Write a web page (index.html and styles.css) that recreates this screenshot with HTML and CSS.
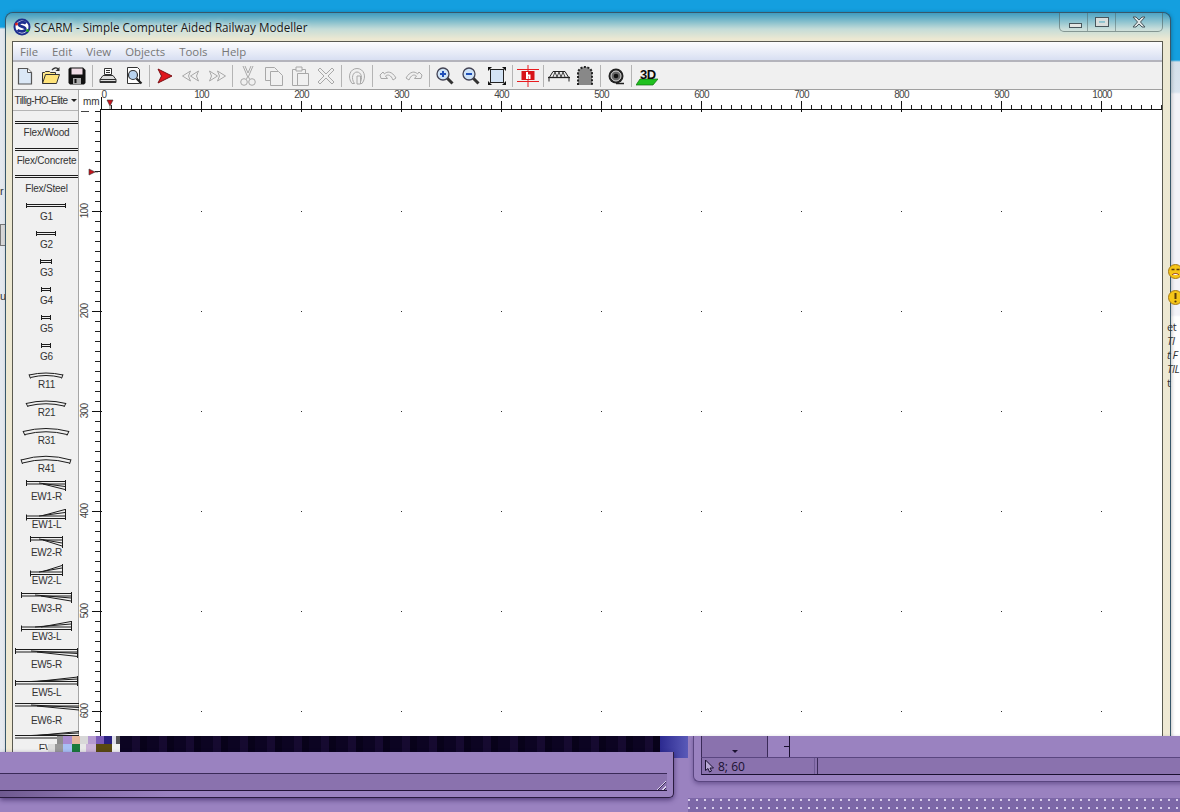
FILE: index.html
```html
<!DOCTYPE html>
<html>
<head>
    <title>SCARM - Simple Computer Aided Railway Modeller</title>
    <link rel="stylesheet" href="styles.css">
</head>
<body>
    <section class="desktop">
        <span class="behind behind-r">r</span>
        <span class="behind behind-btn"></span>
        <span class="behind behind-u">u</span>

        <section class="window">
            <div class="titlebar">
                <svg class="app-logo" width="18" height="18" viewBox="0 0 18 18">
                    <circle cx="9" cy="9" r="7.500" fill="#fff" stroke="#1d2f8f" stroke-width="2"/>
                    <path d="M13 5.500C11 3.500 5.500 4 6 6.800c.4 2.200 6.500 1.700 6.300 4.400C12 14 6.500 14 4.500 12" fill="none" stroke="#1d2f8f" stroke-width="2.800"/>
                    <circle cx="3.500" cy="6" r="1.500" fill="#d22"/>
                    <circle cx="14.500" cy="12.500" r="1.500" fill="#2a2"/>
                </svg>
                <span class="app-title">SCARM - Simple Computer Aided Railway Modeller</span>
            </div>
            <div class="controls">
                <span class="ctl ctl-min"><i></i></span>
                <span class="ctl ctl-max"><i></i></span>
                <span class="ctl ctl-close">
                    <svg width="16" height="12" viewBox="0 0 16 12"><path d="M2 1h3l3 3 3-3h3l-4.500 5 4.500 5h-3l-3-3-3 3H2l4.500-5z" fill="#dfe5e6" stroke="#47565c"/></svg>
                </span>
            </div>

            <div class="frame">
                <nav class="menu">
                    <span>File</span><span>Edit</span><span>View</span><span>Objects</span><span>Tools</span><span>Help</span>
                </nav>

                <div class="toolbar">
                    <span class="tool"><svg viewBox="0 0 20 20"><path d="M3.500 2.500h9l4 4v11.500h-13z" fill="#dbe8f6" stroke="#555" stroke-width="1.200"/><path d="M12.500 2.500v4h4" fill="#fff" stroke="#555"/></svg></span>
                    <span class="tool"><svg viewBox="0 0 20 20"><path d="M1.500 17.500v-11h2l1-1h4l1 1h5v2" fill="#ffe88a" stroke="#333"/><path d="M1.500 17.500l3-9h14l-3 9z" fill="#ffe47a" stroke="#333"/><path d="M11 4c2-2.500 4.500-2.500 6-1" fill="none" stroke="#333" stroke-width="1.300"/><path d="M18.500 1v4h-4z" fill="#333"/></svg></span>
                    <span class="tool"><svg viewBox="0 0 20 20"><path d="M3 1.500h13l2.500 2.500v13l-1.500 1.500H3L1.500 17V3z" fill="#111"/><rect x="4.500" y="2.500" width="11" height="6" fill="#f0dde6"/><rect x="6" y="12" width="8" height="6" fill="#aaa"/><rect x="7.500" y="13" width="2" height="4" fill="#111"/></svg></span>
                    <i class="tool-sep"></i>
                    <span class="tool"><svg viewBox="0 0 20 20"><path d="M6.500 2.500h7v6h-7z" fill="#fff" stroke="#333"/><path d="M8 4.500h4M8 6.500h4" stroke="#333"/><path d="M5 9.500h10l3 4v3h-16v-3z" fill="#ddd" stroke="#333"/><path d="M2 13.500h16" stroke="#333"/><rect x="2" y="15" width="16" height="2" fill="#333"/></svg></span>
                    <span class="tool"><svg viewBox="0 0 20 20"><path d="M3.500 1.500h10l2 2v14h-12z" fill="#fff" stroke="#333"/><circle cx="9" cy="9" r="4.500" fill="#b9d3ee" stroke="#333" stroke-width="1.200"/><path d="M12.500 12.500l5 5" stroke="#222" stroke-width="2.200"/></svg></span>
                    <i class="tool-sep"></i>
                    <span class="tool"><svg viewBox="0 0 20 20"><path d="M3 3l14 7-14 7 3.500-7z" fill="#e0161c" stroke="#7a1015"/></svg></span>
                    <span class="tool off"><svg viewBox="0 0 20 20"><path d="M1.500 10l8-5-2 5 2 5zM9.500 10l8-5-2 5 2 5z"/></svg></span>
                    <span class="tool off"><svg viewBox="0 0 20 20"><path d="M18.500 10l-8-5 2 5-2 5zM10.500 10l-8-5 2 5-2 5z"/></svg></span>
                    <i class="tool-sep"></i>
                    <span class="tool off"><svg viewBox="0 0 20 20"><path d="M5 0l4.500 10.500M15 0l-4.500 10.500"/><path d="M7 0l3 7 3-7"/><circle cx="6" cy="16" r="3.300"/><circle cx="14" cy="16" r="3.300"/><path d="M8.500 13l1.500-3 1.500 3"/></svg></span>
                    <span class="tool off"><svg viewBox="0 0 20 20"><path d="M1.500 1.500h9l3 3v10h-12z"/><path d="M6.500 5.500h8l4 4v10h-12z" fill="#f0f0f0"/></svg></span>
                    <span class="tool off"><svg viewBox="0 0 20 20"><path d="M2.500 3.500h13v16h-13z"/><path d="M6 1h6v4H6z" fill="#f0f0f0"/><path d="M7.500 7.500h11v12h-11z" fill="#f0f0f0"/></svg></span>
                    <span class="tool off"><svg viewBox="0 0 20 20"><path d="M2 4l2-2 6 6 6-6 2 2-6 6 6 6-2 2-6-6-6 6-2-2 6-6z"/></svg></span>
                    <i class="tool-sep"></i>
                    <span class="tool off"><svg viewBox="0 0 20 20"><path d="M5 17.500C0 11 3 2.500 10 2.500s10 8.500 5 15h-2.500C16.500 12 14 6 10 6S3.500 12 7.500 17.500z"/><path d="M10 10h3.500v8H10z" fill="#f0f0f0"/></svg></span>
                    <i class="tool-sep"></i>
                    <span class="tool off"><svg viewBox="0 0 20 20"><path d="M2 9l3-3 1.500 2C9 5 14 5 18 12l-3 2c-2-5-5-6-7.500-4l2 2.500H3z"/></svg></span>
                    <span class="tool off"><svg viewBox="0 0 20 20"><path d="M18 9l-3-3-1.500 2C11 5 6 5 2 12l3 2c2-5 5-6 7.500-4l-2 2.500H17z"/></svg></span>
                    <i class="tool-sep"></i>
                    <span class="tool"><svg viewBox="0 0 20 20"><path d="M12 12l5.500 5.500" stroke="#333" stroke-width="3"/><circle cx="8" cy="8" r="6" fill="#cfe3f7" stroke="#445" stroke-width="1.300"/><path d="M5 8h6M8 5v6" stroke="#1f4fb8" stroke-width="2"/></svg></span>
                    <span class="tool"><svg viewBox="0 0 20 20"><path d="M12 12l5.500 5.500" stroke="#333" stroke-width="3"/><circle cx="8" cy="8" r="6" fill="#cfe3f7" stroke="#445" stroke-width="1.300"/><path d="M5 8h6" stroke="#1f4fb8" stroke-width="2"/></svg></span>
                    <span class="tool"><svg viewBox="0 0 20 20"><rect x="3.500" y="3.500" width="13" height="13" fill="#d3e3f5" stroke="#222"/><path d="M1 1h4L1 5zM19 1h-4l4 4zM1 19h4l-4-4zM19 19h-4l4-4z" fill="#111"/></svg></span>
                    <i class="tool-sep"></i>
                    <span class="tool"><svg class="tall" viewBox="0 0 22 22"><path d="M0 4.500h22M0 16.500h22M11 0v22" stroke="#e81c20"/><rect x="4.500" y="6" width="13" height="9" fill="#d81418"/><path d="M9 7h2v2.500h2.500V14h-2v-3H11v3H9z" fill="#fff"/></svg></span>
                    <i class="tool-sep"></i>
                    <span class="tool"><svg viewBox="0 0 22 20" class="wide"><path d="M1 15.500V12L5 5.500h12l4 6.500v3.500" fill="none" stroke="#222"/><path d="M0 11.500h22" stroke="#222" stroke-width="1.300"/><path d="M5 11l2-5 2 5 2-5 2 5 2-5 2 5" fill="none" stroke="#444"/></svg></span>
                    <span class="tool"><svg viewBox="0 0 20 20"><path d="M3 19V7c0-4 4-6 7-6s7 2 7 6v12z" fill="#888"/><path d="M3 19V7c0-4 4-6 7-6s7 2 7 6v12" fill="none" stroke="#222" stroke-width="2" stroke-dasharray="2 1.500"/></svg></span>
                    <i class="tool-sep"></i>
                    <span class="tool"><svg viewBox="0 0 20 20"><circle cx="10" cy="10" r="7.500" fill="#222"/><circle cx="10" cy="10" r="5" fill="#666" stroke="#ddd"/><circle cx="10" cy="10" r="2.300" fill="#111"/><path d="M10 17.500h8" stroke="#222" stroke-width="1.500"/></svg></span>
                    <i class="tool-sep"></i>
                    <span class="tool"><svg class="wide" viewBox="0 0 22 20"><path d="M4 13h18l-5 6H0z" fill="#1fc11f" stroke="#0f6f0f" stroke-width=".7"/><text class="icon-3d" x="4" y="13">3D</text></svg></span>
                </div>

                <div class="work">
                    <aside class="palette">
                        <div class="palette-combo"><span>Tillig-HO-Elite</span><i></i></div>
                        <div class="palette-list">
                            <div class="piece flex-a"><span class="rails"></span><label>Flex/Wood</label></div>
                            <div class="piece flex-b"><span class="rails"></span><label>Flex/Concrete</label></div>
                            <div class="piece flex-c"><span class="rails"></span><label>Flex/Steel</label></div>

                            <div class="piece"><svg viewBox="0 0 66 16"><path d="M13 6.500h40M13 8.500h40M13.500 5v5M52.500 5v5"/></svg><label>G1</label></div>
                            <div class="piece"><svg viewBox="0 0 66 16"><path d="M23 6.500h20M23 8.500h20M23.500 5v5M42.500 5v5"/></svg><label>G2</label></div>
                            <div class="piece"><svg viewBox="0 0 66 16"><path d="M27 6.500h12M27 8.500h12M27.500 5v5M38.500 5v5"/></svg><label>G3</label></div>
                            <div class="piece"><svg viewBox="0 0 66 16"><path d="M28 6.500h10M28 8.500h10M28.500 5v5M37.500 5v5"/></svg><label>G4</label></div>
                            <div class="piece"><svg viewBox="0 0 66 16"><path d="M28 6.500h10M28 8.500h10M28.500 5v5M37.500 5v5"/></svg><label>G5</label></div>
                            <div class="piece"><svg viewBox="0 0 66 16"><path d="M28 6.500h10M28 8.500h10M28.500 5v5M37.500 5v5"/></svg><label>G6</label></div>

                            <div class="piece"><svg viewBox="0 0 66 16"><path d="M16 9Q33 5 50 9M17.500 11.500Q33 7.500 48.500 11.500M16 8.500l1.500 4M50 8.500l-1.500 4"/></svg><label>R11</label></div>
                            <div class="piece"><svg viewBox="0 0 66 16"><path d="M13 9.500Q33 4.500 53 9.500M15 12Q33 7.500 51 12M13 9l2 4M53 9l-2 4"/></svg><label>R21</label></div>
                            <div class="piece"><svg viewBox="0 0 66 16"><path d="M10 9.500Q33 3.500 56 9.500M12 12.500Q33 7 54 12.500M10 9l2 4.500M56 9l-2 4.500"/></svg><label>R31</label></div>
                            <div class="piece"><svg viewBox="0 0 66 16"><path d="M8 10Q33 2.500 58 10M9.500 13Q33 6.500 56.500 13M8 9.500l1.500 4.500M58 9.500l-1.500 4.500"/></svg><label>R41</label></div>

                            <div class="piece"><svg viewBox="0 0 66 16"><path d="M13 3.500h39M13 6h39M13.500 2v6M26 5l26 3.500M30 6l22 5.500M52.500 2v11"/></svg><label>EW1-R</label></div>
                            <div class="piece"><svg viewBox="0 0 66 16"><path d="M13 10h39M13 12.500h39M13.500 8.500v6M26 10l26-3.500M30 9.500l22-6M52.500 3v11"/></svg><label>EW1-L</label></div>
                            <div class="piece"><svg viewBox="0 0 66 16"><path d="M17 3.500h32M17 6h32M17.500 2v6M26 5l23 4M30 6l19 6M49.500 2v12"/></svg><label>EW2-R</label></div>
                            <div class="piece"><svg viewBox="0 0 66 16"><path d="M17 10h32M17 12.500h32M17.500 8.500v6M26 10l23-4M30 9.500l19-6M49.500 2v12"/></svg><label>EW2-L</label></div>
                            <div class="piece"><svg viewBox="0 0 66 16"><path d="M8 3.500h50M8 6h50M8.500 2v6M22 5l36 3M28 6l30 5M58.500 2v11"/></svg><label>EW3-R</label></div>
                            <div class="piece"><svg viewBox="0 0 66 16"><path d="M8 9h50M8 11.500h50M8.500 7.500v6M22 9l36-3M28 9l30-5.500M58.500 3v10"/></svg><label>EW3-L</label></div>
                            <div class="piece"><svg viewBox="0 0 66 16"><path d="M2 3.500h63M2 6h63M2.500 2v6M18 5l47 2.500M24 6l41 4.500M64.500 2v10"/></svg><label>EW5-R</label></div>
                            <div class="piece"><svg viewBox="0 0 66 16"><path d="M2 7.500h63M2 10h63M2.500 6v6M18 7.500l47-2.500M24 7.500l41-4.500M64.500 2v10"/></svg><label>EW5-L</label></div>
                            <div class="piece"><svg viewBox="0 0 66 16"><path d="M2 1.500h64M2 4h64M18 3l48 2.500M24 4l42 4"/></svg><label>EW6-R</label></div>
                            <div class="piece"><svg viewBox="0 0 66 16"><path d="M2 5.500h64M2 8h64M18 5.500l48-2.500M24 5.500l42-4"/></svg><label>EW</label></div>
                        </div>
                    </aside>

                    <svg class="board" width="1083" height="660" viewBox="0 0 1083 660">
                        <defs>
                            <pattern id="tick-x" x="22" y="0" width="10" height="20" patternUnits="userSpaceOnUse"><rect width="1" height="5" y="15" fill="#222"/></pattern>
                            <pattern id="tick-y" x="0" y="21" width="22" height="10" patternUnits="userSpaceOnUse"><rect x="16" width="5" height="1" fill="#222"/></pattern>
                            <pattern id="dots" x="122" y="121" width="100" height="100" patternUnits="userSpaceOnUse"><rect width="1" height="1" fill="#333"/></pattern>
                            <pattern id="major-x" x="22" y="0" width="100" height="22" patternUnits="userSpaceOnUse"><rect width="1" height="11" y="11" fill="#111"/></pattern>
                            <pattern id="major-y" x="0" y="21" width="24" height="100" patternUnits="userSpaceOnUse"><rect x="13" width="10" height="1" fill="#111"/></pattern>
                        </defs>
                        <rect x="23" y="21" width="1060" height="639" fill="url(#dots)"/>
                        <rect x="22" y="0" width="1061" height="20" fill="url(#tick-x)"/>
                        <rect x="122" y="0" width="961" height="22" fill="url(#major-x)"/>
                        <rect x="0" y="21" width="22" height="639" fill="url(#tick-y)"/>
                        <rect x="0" y="121" width="24" height="539" fill="url(#major-y)"/>
                        <rect x="21" y="19" width="1062" height="1" fill="#111"/>
                        <rect x="21" y="19" width="1" height="641" fill="#111"/>
                        <rect x="22" y="7" width="1" height="13" fill="#111"/>
                        <rect x="2" y="21" width="8" height="1" fill="#444"/>

                        <text class="unit" x="4" y="15">mm</text>
                        <path class="marker" d="M28 10h6l-3 6zM31 16v3"/>
                        <path class="marker" d="M10 79v6l6-3zM16 82h3"/>

                        <g class="num">
                            <text x="25" y="8">0</text>
                            <text x="122.500" y="8">100</text>
                            <text x="222.500" y="8">200</text>
                            <text x="322.500" y="8">300</text>
                            <text x="422.500" y="8">400</text>
                            <text x="522.500" y="8">500</text>
                            <text x="622.500" y="8">600</text>
                            <text x="722.500" y="8">700</text>
                            <text x="822.500" y="8">800</text>
                            <text x="922.500" y="8">900</text>
                            <text x="1023" y="8">1000</text>
                            <text transform="translate(9 121) rotate(-90)">100</text>
                            <text transform="translate(9 221) rotate(-90)">200</text>
                            <text transform="translate(9 321) rotate(-90)">300</text>
                            <text transform="translate(9 421) rotate(-90)">400</text>
                            <text transform="translate(9 521) rotate(-90)">500</text>
                            <text transform="translate(9 621) rotate(-90)">600</text>
                        </g>
                    </svg>
                </div>
            </div>
        </section>

        <div class="side-notes">
            <span class="emo">
                <svg width="15" height="15" viewBox="0 0 15 15"><circle cx="7.500" cy="7.500" r="7" fill="#f5c518" stroke="#a87a10"/><path d="M3.500 5.500h3M8.500 5.500h3" stroke="#5a3a08" stroke-width="1.500"/><path d="M4 11c2-2 5-2 7 0" fill="#fff" stroke="#8a2a10"/></svg>
            </span>
            <span class="emo">
                <svg width="15" height="15" viewBox="0 0 15 15"><circle cx="7.500" cy="7.500" r="7" fill="#f5c518" stroke="#a87a10"/><path d="M7.500 3v6" stroke="#5a3a08" stroke-width="2"/><circle cx="7.500" cy="11.500" r="1.100" fill="#5a3a08"/></svg>
            </span>
            <p>et</p>
            <p class="em">TI</p>
            <p class="em">t F</p>
            <p class="em">TIL</p>
            <p>t</p>
        </div>

        <div class="bottom-fill"></div>

        <div class="noise-band">
            <div class="noise-blocks"></div>
            <div class="noise-dark"></div>
            <div class="noise-end"></div>
        </div>

        <section class="dlg-left">
            <div class="dlg-left-top"></div>
            <div class="dlg-left-status"><span class="grip"></span></div>
            <div class="dlg-left-foot"></div>
        </section>

        <section class="dlg-right">
            <div class="dlg-right-top">
                <span class="cell-drop"><i></i></span>
                <span class="cell-ruler"><i></i></span>
            </div>
            <div class="dlg-right-status">
                <span class="coords">
                    <svg width="12" height="14" viewBox="0 0 12 14"><path d="M1.500 1v10.500l2.500-2 1.500 3.500 2-1-1.500-3h3.500z" fill="#b8a8d4" stroke="#1a1030"/></svg>
                    8; 60
                </span>
                <span class="status-rest"></span>
            </div>
        </section>
        <div class="dot-strip"></div>
    </section>
</body>
</html>
```

FILE: styles.css
```css
html, body {
    margin: 0;
    padding: 0;
    overflow: hidden;
}

body {
    font-family: "Liberation Sans", sans-serif;
}

.desktop {
    position: relative;
    width: 1180px;
    height: 812px;
    overflow: hidden;
    background:
        linear-gradient(#149fdf 0, #149fdf 60px, #d4e0ea 62px, #d8e3ee 92px, #f3f3f8 94px, #f3f3f8 315px, #fff 317px) right top / 20px 100% no-repeat,
        linear-gradient(#149fdf 0, #149fdf 27px, #e3e8ee 29px, #e6eaf0 100%) left top / 20px 100% no-repeat,
        #149fdf;
}

.behind {
    position: absolute;
    left: 0;
    font-size: 11px;
    color: #333;
}

.behind-r { top: 185px; }
.behind-u { top: 290px; }

.behind-btn {
    top: 224px;
    width: 5px;
    height: 20px;
    border: 1px solid #777;
    background: #d8d8d8;
}

/* main window */
.window {
    position: absolute;
    left: 6px;
    top: 13px;
    width: 1164px;
    height: 760px;
    box-sizing: border-box;
    padding: 28px 7px 0 6px;
    border-radius: 7px 7px 0 0;
    background: linear-gradient(#3f9cc0 0, #7fbccb 8px, #c4dcd8 16px, #ece8d2 26px, #efe9d4 100%);
    box-shadow: 0 0 0 1px #37576a, 1px 0 4px rgba(0, 0, 0, 0.35);
}

.titlebar {
    position: absolute;
    left: 7px;
    top: 5px;
    display: flex;
    align-items: center;
    gap: 3px;
}

.app-title {
    font-family: "Open Sans", sans-serif;
    font-size: 11.7px;
    line-height: 18px;
    color: #1a1a1a;
    text-shadow: 0 0 6px rgba(255, 255, 255, 0.9);
}

.controls {
    position: absolute;
    right: 7px;
    top: 0;
    display: flex;
    height: 18px;
    border: 1px solid rgba(70, 90, 90, 0.55);
    border-top: none;
    border-radius: 0 0 5px 5px;
    background: rgba(255, 255, 255, 0.08);
}

.ctl {
    display: flex;
    align-items: center;
    justify-content: center;
    width: 27px;
    border-right: 1px solid rgba(70, 90, 90, 0.45);
}

.ctl-close {
    width: 46px;
    border-right: none;
}

.ctl-min i {
    display: block;
    width: 11px;
    height: 3px;
    margin-top: 7px;
    margin-left: 3px;
    border: 1px solid #47565c;
    background: #e3e6e4;
}

.ctl-max i {
    display: block;
    width: 6px;
    height: 2px;
    border: 3px solid #d8dedd;
    outline: 1px solid #47565c;
}

.frame {
    height: 100%;
    border: 1px solid #5a5a50;
    border-bottom: none;
    background: #f0f0f0;
}

.menu {
    display: flex;
    gap: 14px;
    height: 18px;
    padding-left: 7px;
    font-family: "Open Sans", sans-serif;
    font-size: 11.4px;
    line-height: 19px;
    color: #777;
    background: linear-gradient(#fdfdfe, #d8dff2);
    border-bottom: 2px solid #b4b4bc;
}

.toolbar {
    display: flex;
    align-items: center;
    gap: 2px;
    height: 27px;
    background: #f0f0f0;
    border-bottom: 1px solid #a0a0a0;
}

.tool {
    display: flex;
    align-items: center;
    justify-content: center;
    width: 24px;
    height: 24px;
}

.tool svg {
    width: 20px;
    height: 20px;
    flex-shrink: 0;
}

.tool svg.wide {
    width: 22px;
}

.tool svg.tall {
    width: 22px;
    height: 22px;
}

.tool.off svg {
    fill: none;
    stroke: #a8a8a8;
    stroke-width: 1;
}

.tool-sep {
    display: block;
    width: 1px;
    height: 22px;
    margin: 0 1px;
    background: #b4b4b4;
}

.icon-3d {
    font-family: "Liberation Sans", sans-serif;
    font-size: 13px;
    font-weight: 700;
    letter-spacing: -0.5px;
    fill: #0a0a0a;
}

.work {
    display: flex;
    height: 660px;
    background: #fff;
    overflow: hidden;
}

/* track palette */
.palette {
    width: 65px;
    flex-shrink: 0;
    background: #f0f0f0;
    border-right: 1px solid #a6a6a6;
    color: #333;
    font-size: 10px;
}

.palette-combo {
    display: flex;
    align-items: center;
    justify-content: center;
    gap: 3px;
    height: 20px;
    border-bottom: 1px solid #b4b4b4;
    letter-spacing: -0.55px;
    white-space: nowrap;
}

.palette-combo i {
    width: 0;
    height: 0;
    border: 3px solid transparent;
    border-top: 3px solid #222;
    border-bottom: none;
}

.palette-list {
    padding-top: 7px;
}

.piece {
    display: flex;
    flex-direction: column;
    align-items: center;
    height: 28px;
}

.piece svg {
    display: block;
    width: 66px;
    height: 16px;
    margin-top: -4px;
    flex-shrink: 0;
    fill: none;
    stroke: #1c1c1c;
    stroke-width: 1;
}

.piece label {
    display: block;
    margin-top: -3px;
    margin-left: 2px;
    line-height: 12px;
    letter-spacing: -0.2px;
    white-space: nowrap;
}

.piece .rails {
    display: block;
    width: 63px;
    height: 1px;
    margin-left: 2px;
    border-top: 1px solid #1c1c1c;
    border-bottom: 1px solid #1c1c1c;
    flex-shrink: 0;
}

.flex-a .rails { margin-top: 3px; }
.flex-b .rails { margin-top: 2px; }
.flex-c .rails { margin-top: 1px; }

.flex-a label { margin-top: 3px; }
.flex-b label { margin-top: 4px; }
.flex-c label { margin-top: 5px; }

.board {
    display: block;
    flex-shrink: 0;
    background: #fff;
}

.num text {
    font-family: "Liberation Sans", sans-serif;
    font-size: 10px;
    letter-spacing: -0.7px;
    text-anchor: middle;
    fill: #444;
}

.unit {
    font-family: "Liberation Sans", sans-serif;
    font-size: 10px;
    letter-spacing: -0.2px;
    fill: #333;
}

.marker {
    fill: #c8141c;
    stroke: #333;
    stroke-width: 0.6;
}

/* what shows past the right edge of the window */
.side-notes {
    position: absolute;
    left: 1167px;
    top: 264px;
    width: 13px;
    overflow: hidden;
    font-family: "Open Sans", sans-serif;
    font-size: 11px;
    line-height: 14px;
    letter-spacing: -0.5px;
    color: #333;
    white-space: nowrap;
}

.side-notes p {
    margin: 0;
}

.side-notes .em {
    font-style: italic;
}

.emo {
    display: block;
    width: 15px;
    height: 15px;
    margin-left: 1px;
    margin-bottom: 11px;
}

.emo svg {
    display: block;
}

.side-notes p:first-of-type {
    margin-top: 15px;
}

/* damaged repaint along the bottom */
.bottom-fill {
    position: absolute;
    left: 0;
    top: 736px;
    width: 1180px;
    height: 76px;
    background: linear-gradient(#9a82c0 0 100%) 0 16px / 688px 60px no-repeat,
        linear-gradient(#9a82c0 0 100%) 688px 0 / 492px 76px no-repeat;
}

.noise-band {
    position: absolute;
    left: 48px;
    top: 736px;
    display: flex;
    width: 640px;
    height: 16px;
}

.noise-blocks {
    width: 72px;
    background:
        linear-gradient(90deg, transparent 0 9px, #8d8d8d 9px 15px, #a98bd0 15px 24px, #e5b79e 24px 32px, #d8d8d8 32px 40px, #b59ad0 40px 48px, #7a5ab8 48px 56px, #2a2080 56px 64px, #e0e0ea 64px 68px, #555 68px 72px) top / 100% 8px no-repeat,
        linear-gradient(90deg, #dcdcdc 0 7px, #9a9a9a 7px 15px, #a8c0f5 15px 24px, #1a7a3a 24px 32px, #e8e8e8 32px 38px, #cbb3d8 38px 48px, #5a4a10 48px 64px, #f2f2f2 64px 72px) bottom / 100% 8px no-repeat;
}

.noise-dark {
    flex: 1;
    background: repeating-linear-gradient(90deg, #0c0422 0 12px, #160a30 12px 20px, #08021a 20px 27px);
}

.noise-end {
    width: 28px;
    height: 22px;
    background: linear-gradient(90deg, #2c2a90, #5a5ab8);
}

.dlg-left {
    position: absolute;
    left: 0;
    top: 752px;
    display: flex;
    flex-direction: column;
    box-sizing: border-box;
    width: 674px;
    height: 46px;
    padding-right: 6px;
    background: #9a82c0;
    border: 1px solid #2a1c40;
    border-width: 0 1px 1px 0;
    border-radius: 0 0 5px 0;
    box-shadow: 0 2px 5px rgba(40, 20, 80, 0.6);
}

.dlg-left-top {
    height: 21px;
    border-bottom: 1px solid #3a2a58;
}

.dlg-left-status {
    position: relative;
    height: 16px;
    background: #8a72ae;
    border-bottom: 1px solid #221438;
}

.dlg-left-foot {
    flex: 1;
    background: linear-gradient(90deg, #6f5a90 0, #8a72ae 80px, #9a82c0 170px);
}

.grip {
    position: absolute;
    right: 1px;
    bottom: 0;
    width: 12px;
    height: 12px;
    background: repeating-linear-gradient(135deg, transparent 0 2px, #ddd0ee 2px 3px, #3a2a58 3px 4px);
    clip-path: polygon(100% 0, 100% 100%, 0 100%);
}

.dlg-right {
    position: absolute;
    left: 693px;
    top: 736px;
    display: flex;
    flex-direction: column;
    box-sizing: border-box;
    width: 500px;
    height: 46px;
    padding-left: 7px;
    background: #9a82c0;
    border: 1px solid #5a4680;
    border-width: 0 0 1px 1px;
    border-radius: 0 0 0 6px;
    box-shadow: 0 2px 4px rgba(40, 20, 80, 0.4);
}

.dlg-right-top {
    display: flex;
    height: 21px;
    border-left: 1px solid #3a2a58;
    border-bottom: 1px solid #5a4680;
}

.cell-drop {
    display: flex;
    justify-content: center;
    align-items: flex-end;
    width: 65px;
    padding-bottom: 4px;
    background: #8a72ae;
    border-right: 1px solid #3a2a58;
}

.cell-drop i {
    width: 0;
    height: 0;
    border: 3px solid transparent;
    border-top: 3px solid #1a1030;
    border-bottom: none;
}

.cell-ruler {
    display: flex;
    align-items: center;
    justify-content: flex-end;
    width: 21px;
    border-right: 1px solid #1a1030;
}

.cell-ruler i {
    width: 5px;
    height: 1px;
    background: #1a1030;
}

.dlg-right-status {
    display: flex;
    height: 16px;
    background: #8a72ae;
    border-left: 1px solid #3a2a58;
    border-bottom: 1px solid #1a1030;
}

.coords {
    display: flex;
    align-items: center;
    gap: 2px;
    width: 110px;
    padding-left: 2px;
    font-family: "Open Sans", sans-serif;
    font-size: 12px;
    color: #1a1030;
    border-right: 1px solid #6e5a94;
}

.status-rest {
    flex: 1;
    margin-left: 2px;
    border-left: 1px solid #3a2a58;
}

.dot-strip {
    position: absolute;
    left: 688px;
    top: 798px;
    width: 492px;
    height: 14px;
    background: #7d68a8 radial-gradient(circle at 1px 1px, #d8cdea 0 1px, transparent 1.3px) 0 1px / 8px 8px;
}
```
